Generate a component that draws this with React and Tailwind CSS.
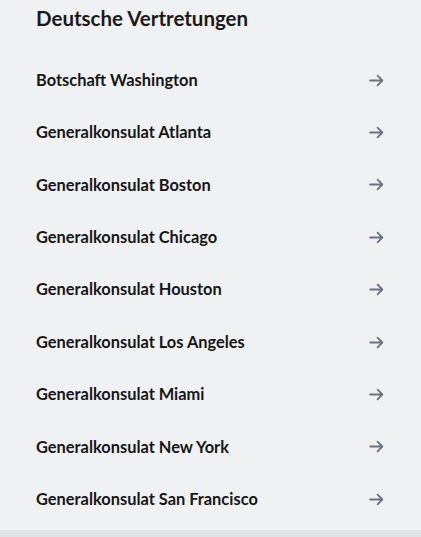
import React from "react";

const items = [
  "Botschaft Washington",
  "Generalkonsulat Atlanta",
  "Generalkonsulat Boston",
  "Generalkonsulat Chicago",
  "Generalkonsulat Houston",
  "Generalkonsulat Los Angeles",
  "Generalkonsulat Miami",
  "Generalkonsulat New York",
  "Generalkonsulat San Francisco",
];

function Arrow() {
  return (
    <svg width="17" height="17" viewBox="0 0 16 16" fill="none" stroke="#6b7280" strokeWidth="1.7" strokeLinecap="round" strokeLinejoin="round">
      <path d="M2 8h11.5M9 3.5L13.5 8 9 12.5" />
    </svg>
  );
}

export default function App() {
  return (
    <div className="w-[421px] h-[537px] bg-[#f0f1f3] flex flex-col overflow-hidden" style={{ fontFamily: "Lato, 'Noto Sans', sans-serif" }}>
      <div className="flex-1 pl-[36px] pr-[36px]">
        <h2 className="text-[20.5px] leading-[24px] font-bold text-[#1a1a1a] pt-[6px]">Deutsche Vertretungen</h2>
        <ul className="mt-[24px] flex flex-col">
          {items.map((t) => (
            <li key={t} className="h-[52.4px] flex items-center justify-between">
              <span className="text-[16.4px] font-bold text-[#161616]">{t}</span>
              <Arrow />
            </li>
          ))}
        </ul>
      </div>
      <div className="h-[7px] bg-[#e1e2e4]" />
    </div>
  );
}
